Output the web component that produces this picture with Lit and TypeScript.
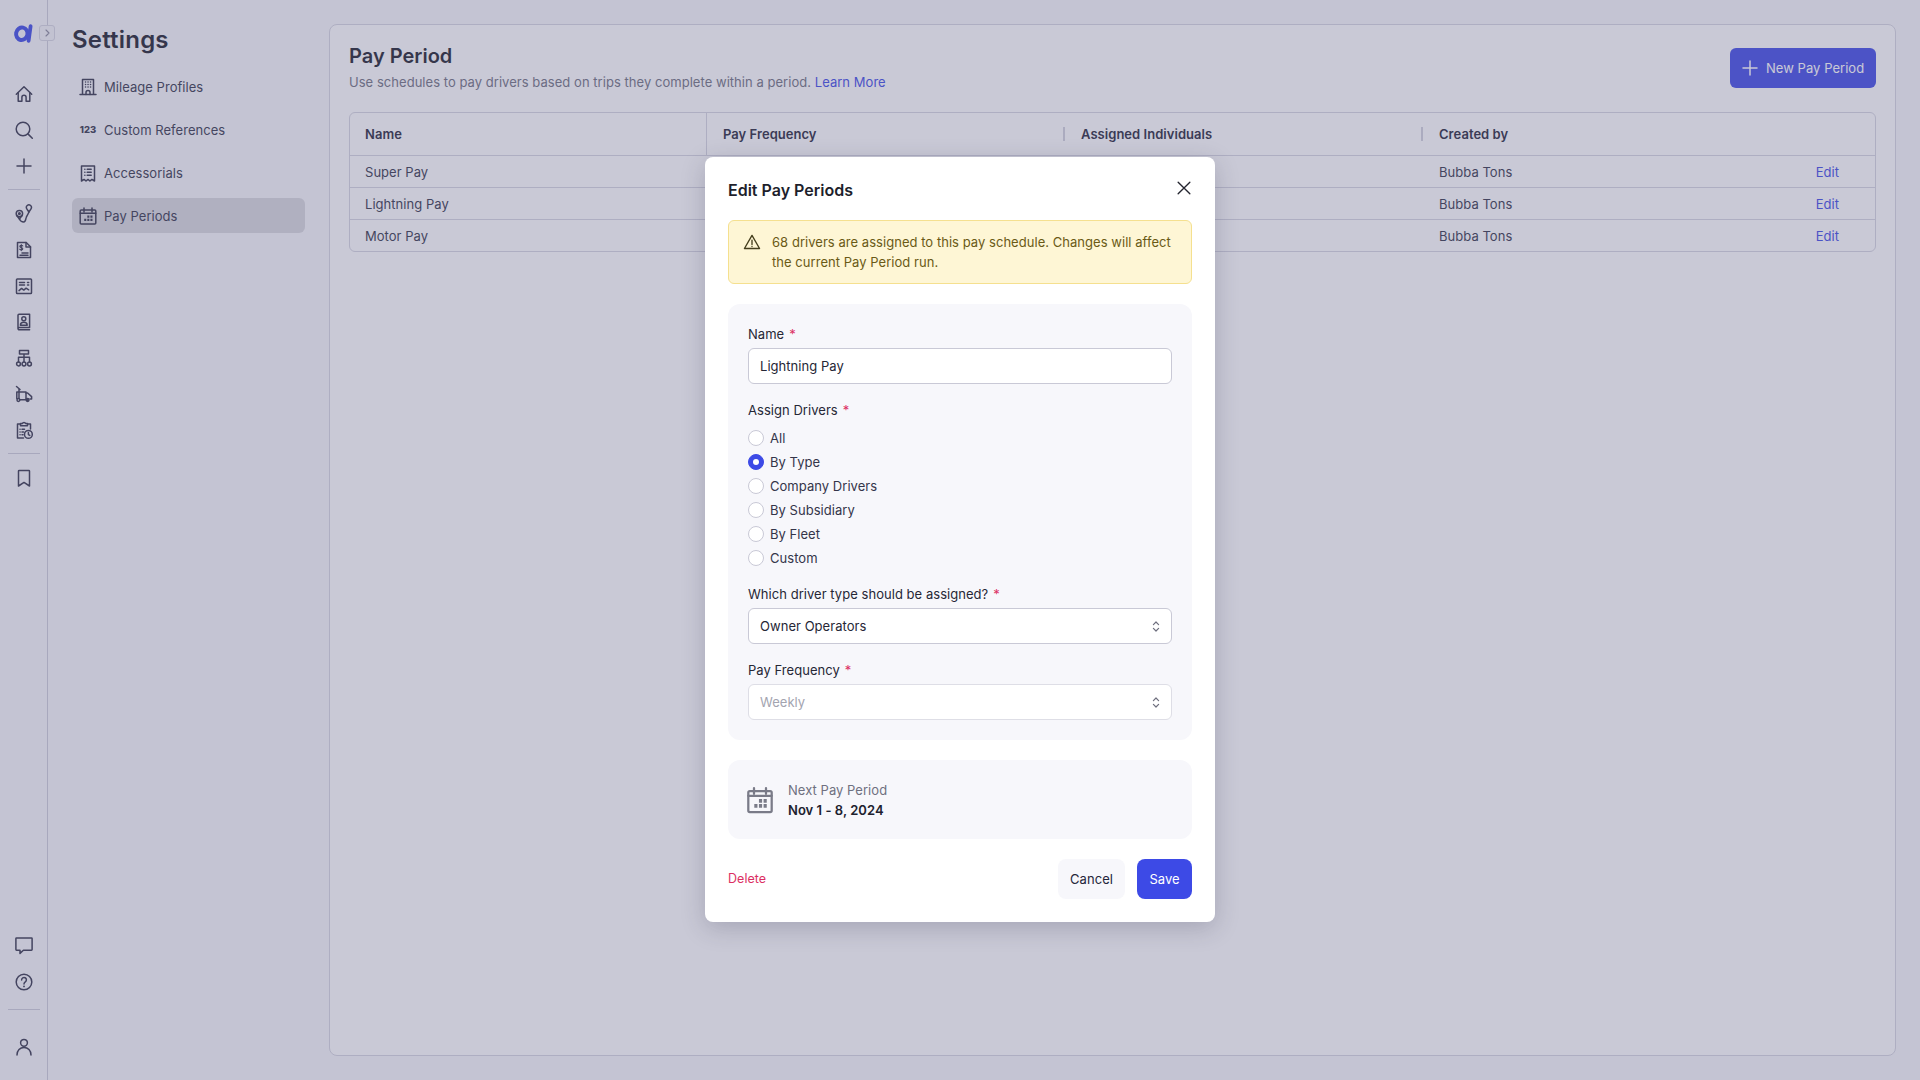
import { LitElement, html, css, svg } from "lit";
import { customElement } from "lit/decorators.js";

const I = (body: unknown, size = 20, vb = 20) =>
  html`<svg class="ic" width=${size} height=${size} viewBox="0 0 ${vb} ${vb}" fill="none" stroke="currentColor" stroke-width="1.5" stroke-linecap="round" stroke-linejoin="round">${body}</svg>`;

const icons = {
  home: svg`<path d="M2.3 10.2 10 2.8l7.7 7.4"/><path d="M4.2 8.6v8.6h3.7v-3.8a2.1 2.1 0 0 1 4.2 0v3.8h3.7V8.6"/>`,
  search: svg`<circle cx="9" cy="9" r="6.8"/><path d="m13.9 13.9 4.4 4.4"/>`,
  plus: svg`<path d="M10 3v14M3 10h14"/>`,
  route: svg`<circle cx="5.4" cy="9.6" r="3.2"/><circle cx="5.4" cy="9.6" r=".8"/><path d="M2.8 11.5 5.4 15l2.6-3.5"/><path d="M14.9 8 12.8 4.8a2.5 2.5 0 1 1 4.2 0z"/><path d="M5.4 15c1.2 2.6 2.8 3 4.2 3 2.4 0 2-3 2.6-4.6.5-1.5 1.9-3 2.7-5.4"/>`,
  invoice: svg`<path d="M3.5 2.5h8.7l4.3 4.3v10.7H3.5z"/><path d="M12 2.5V7h4.5M8 13h6M6 15.3h8" /><path d="M8.8 6c-.6-.9-3-.9-3 .5 0 1.5 3 .8 3 2.3 0 1.5-2.5 1.3-3.1.4M7.3 4.6v6" stroke-width="1.1"/>`,
  report: svg`<rect x="2.5" y="3" width="15" height="14.5" rx=".8"/><path d="M5.5 6.4h5M5.5 9h5M13.5 6.4h1.2M13.5 9h1.2" /><path d="m5 14.6 2.6-2.2 2.2 1.7 2.3-1.9 2.6 1.6"/>`,
  contacts: svg`<path d="M4 16.6V3.2a1 1 0 0 1 1-1h10.6v13.4H5.2A1.2 1.2 0 0 0 4 16.6a1.2 1.2 0 0 0 1.2 1.2h10.4"/><circle cx="9.8" cy="6.8" r="2"/><path d="M6.4 13.2c0-1.8 1.5-2.9 3.4-2.9s3.4 1.1 3.4 2.9z"/>`,
  org: svg`<path d="M5.5 2.5h9v3.6h-9zM4.5 9.2h11M10 6.1v8M4.5 9.2v4.9M15.5 9.2v4.9"/><circle cx="4.5" cy="16" r="1.9"/><circle cx="10" cy="16" r="1.9"/><circle cx="15.5" cy="16" r="1.9"/>`,
  truck: svg`<path d="M2.5 2.5 6 5.5M5 4.5v9.5M2.8 8h9.2v7M2.8 8v6.6"/><path d="M12 9h1.6l4 3.6V15H16"/><circle cx="4.4" cy="16" r="1.4"/><circle cx="13.6" cy="16" r="1.4" fill="currentColor"/><path d="M6 15.8h6" />`,
  clip: svg`<path d="M6.5 4H3.5v14h6"/><path d="M6.5 5.8V3.6h1.8a1.8 1.8 0 0 1 3.4 0h1.8v2.2z"/><path d="M13.5 4h3v5"/><path d="M6 9.2h.1M8 9.2h2.5M6 12h.1M8 12h1.5M6 14.8h.1M8 14.8h1"/><circle cx="14.4" cy="14.4" r="3.9"/><path d="M14.4 12.4v2.2l1.4.8"/>`,
  bookmark: svg`<path d="M4.5 3a.6.6 0 0 1 .6-.6h9.8a.6.6 0 0 1 .6.6v15L10 14.4 4.5 18z"/>`,
  chat: svg`<path d="M2.5 3h15a.6.6 0 0 1 .6.6v11a.6.6 0 0 1-.6.6H9.4L6 18.4v-3.2H2.5a.6.6 0 0 1-.6-.6v-11a.6.6 0 0 1 .6-.6z"/>`,
  help: svg`<circle cx="10" cy="10" r="7.8"/><path d="M7.6 7.9a2.4 2.4 0 1 1 3.7 2c-.9.6-1.3 1-1.3 2"/><path d="M10 14.3v.1" stroke-width="1.8"/>`,
  user: svg`<circle cx="10" cy="5.8" r="3.4"/><path d="M3 18c0-4.4 3-7.6 7-7.6s7 3.2 7 7.6"/>`,
  building: svg`<path d="M4.5 17.5v-15h11v15M2 17.5h16"/><path d="M7.5 5h.1M10 5h.1M12.5 5h.1M7.5 7.5h.1M10 7.5h.1M12.5 7.5h.1M7.5 10h.1M10 10h.1M12.5 10h.1"/><path d="M8 17.5v-2a2 2 0 0 1 4 0v2"/>`,
  receipt: svg`<path d="M3.5 3h13v15l-2.6-1.6-2 1.6-1.9-1.6-2 1.6-1.9-1.6-2.6 1.6z"/><path d="M6.8 6.3h.1M9.2 6.3h4M6.8 9.3h.1M9.2 9.3h4M6.8 12.3h.1M9.2 12.3h4"/>`,
  calendar: svg`<rect x="2.2" y="4" width="15.6" height="14" rx="1"/><path d="M6 2v3.8M14 2v3.8M2.2 7.2h15.6"/><path d="M9.3 10.6h2.1M12.4 10.6h2.1M6.2 13.9h2.1M9.3 13.9h2.1M12.4 13.9h2.1" stroke-width="2.4" stroke-linecap="butt"/>`,
  warn: svg`<path d="M10 2.6 18.4 17.2H1.6z"/><path d="M10 8v4.8M10 14.9v.1"/>`,
  close: svg`<path d="m3.5 3.5 13 13M16.5 3.5l-13 13"/>`,
  updown: svg`<path d="m2.4 4.6 2.6-2.6 2.6 2.6M2.4 8.4 5 11l2.6-2.6"/>`,
};

const railTop = [icons.home, icons.search, icons.plus];
const railMid = [icons.route, icons.invoice, icons.report, icons.contacts, icons.org, icons.truck, icons.clip];

@customElement("app-root")
export class AppRoot extends LitElement {
  static styles = css`
    :host {
      display: block;
      position: relative;
      width: 1920px;
      height: 1080px;
      overflow: hidden;
      font-family: Inter, "Liberation Sans", sans-serif;
      font-size: 13px;
      line-height: 20px;
      letter-spacing: 0.04px;
      color: #20212e;
      background: #f8f8fb;
    }
    * { box-sizing: border-box; }
    .ic { display: block; flex: none; }
    .page { display: flex; height: 1080px; }

    .rail {
      width: 48px;
      flex: none;
      display: flex;
      flex-direction: column;
      align-items: center;
      border-right: 1px solid #cdcdd9;
      padding-top: 76px;
      padding-bottom: 15px;
      color: #33344a;
      position: relative;
    }
    .rail-btn { width: 36px; height: 36px; display: flex; align-items: center; justify-content: center; flex: none; }
    .rail-div { width: 32px; height: 1px; background: #cdcdd9; margin: 5px 0 6px; flex: none; }
    .rail-div.last { margin: 9px 0 19px; }
    .rail-spacer { flex: 1; }
    .bottom-gap { margin-bottom: 1px; }
    .logo { position: absolute; left: 13px; top: 23px; }
    .collapse {
      position: absolute;
      left: 39px;
      top: 25px;
      width: 16px;
      height: 16px;
      border: 1px solid #d6d6e0;
      border-radius: 3px;
      background: #f4f4f8;
      color: #8a8a9c;
      display: flex;
      align-items: center;
      justify-content: center;
    }

    .side { width: 281px; flex: none; padding: 24px 24px 0 24px; }
    .side h1 { margin: 0 0 13px; font-size: 24px; line-height: 32px; font-weight: 600; letter-spacing: 0.2px; color: #1d1e2c; }
    .nav { display: flex; flex-direction: column; gap: 8px; }
    .nav-item { height: 35px; width: 233px; display: flex; align-items: center; gap: 6px; padding-left: 6px; border-radius: 6px; color: #34354a; }
    .nav-item.on { background: #d9d9de; }
    .n123 { width: 20px; font-size: 9.5px; font-weight: 800; text-align: center; flex: none; }

    .card {
      flex: 1;
      margin: 24px 24px 24px 0;
      background: #fff;
      border: 1px solid #d6d6e0;
      border-radius: 8px;
      padding: 17px 19px 0;
    }
    .head { display: flex; justify-content: space-between; align-items: center; margin-bottom: 20px; }
    .head h2 { margin: 0 0 2px; font-size: 20px; line-height: 28px; font-weight: 600; letter-spacing: 0; color: #1d1e2c; }
    .head p { margin: 0; color: #6f7080; }
    .link { color: #3d4ae6; }
    .new { height: 40px; width: 146px; margin-top: 2px; background: #3f4be6; color: #fff; border-radius: 6px; display: flex; align-items: center; gap: 6px; padding-left: 10px; }

    .table { border: 1px solid #d6d6e0; border-radius: 6px; }
    .tr { display: grid; grid-template-columns: 356px 358px 358px 1fr; height: 32px; border-top: 1px solid #d6d6e0; align-items: stretch; }
    .tr.th { height: 42px; border-top: 0; font-weight: 600; color: #25263a; }
    .td { display: flex; align-items: center; padding-left: 15px; color: #34354a; }
    .th .td { color: #25263a; }
    .td.full { border-left: 1px solid #d6d6e0; padding-left: 16px; }
    .td.sep { padding-left: 0; }
    .bar { width: 2px; height: 14px; background: #d2d2dc; margin-right: 16px; flex: none; margin-left: -1px; }
    .td.sb { justify-content: space-between; padding: 0 36px 0 17px; }

    .overlay {
      position: absolute;
      inset: 0;
      padding-bottom: 1px;
      background: rgba(100, 100, 138, 0.35);
      display: flex;
      align-items: center;
      justify-content: center;
    }
    .modal {
      width: 510px;
      height: 765px;
      background: #fff;
      border-radius: 8px;
      padding: 21px 23px 23px;
      box-shadow: 0 6px 24px rgba(40, 40, 70, 0.22);
      display: flex;
      flex-direction: column;
      gap: 20px;
    }
    .m-head { display: flex; justify-content: space-between; align-items: flex-start; height: 24px; margin-bottom: -2px; }
    .m-head h3 { margin: 0; font-size: 16px; line-height: 24px; font-weight: 600; letter-spacing: 0; color: #1e1f2c; }
    .x { color: #24252f; margin: 1px -1px 0 0; }
    .alert {
      height: 64px;
      background: #fef6d5;
      border: 1px solid #f5e08f;
      border-radius: 6px;
      display: flex;
      gap: 11px;
      padding: 11px 14px;
      color: #6a5a16;
    }
    .alert .ic { margin-top: 1px; color: #453f1e; }

    .panel { background: #f7f7fb; border-radius: 12px; padding: 20px; }
    .form { height: 436px; display: flex; flex-direction: column; }
    .label { color: #262736; display: flex; }
    .star { color: #dc2f63; margin-left: 5px; }
    .field { height: 36px; margin-top: 4px; background: #fff; border: 1px solid #c9c9d6; border-radius: 6px; display: flex; align-items: center; justify-content: space-between; padding: 0 11px; color: #262736; }
    .field.dis { border-color: #dedee6; color: #a3a4b0; }
    .updown { width: 10px; height: 13px; color: #6e6f7e; margin-right: -1px; }
    .gap16 { margin-top: 16px; }
    .gap14 { margin-top: 14px; }
    .radios { margin-top: 6px; display: flex; flex-direction: column; }
    .radio { height: 24px; display: flex; align-items: center; gap: 6px; color: #34354a; }
    .dot { width: 16px; height: 16px; border-radius: 50%; border: 1px solid #c9c9d6; background: #fff; flex: none; display: flex; align-items: center; justify-content: center; }
    .dot.on { background: #3d4ae6; border-color: #3d4ae6; }
    .dot.on::after { content: ""; width: 6px; height: 6px; border-radius: 50%; background: #fff; }

    .next { height: 79px; display: flex; align-items: center; gap: 13px; padding: 0 17px; }
    .next .ic { color: #7a7b88; }
    .next .k { color: #6f7080; }
    .next .v { color: #20212e; font-weight: 600; }

    .foot { height: 40px; display: flex; align-items: center; gap: 12px; }
    .del { color: #dc2f63; font-size: 12.5px; margin-right: auto; }
    .btn { height: 40px; border-radius: 8px; display: flex; align-items: center; justify-content: center; }
    .cancel { width: 67px; background: #f7f7fb; color: #25263a; }
    .save { width: 55px; background: #3d4ae6; color: #fff; }
  `;

  private rows = ["Super Pay", "Lightning Pay", "Motor Pay"];
  private radios = ["All", "By Type", "Company Drivers", "By Subsidiary", "By Fleet", "Custom"];

  private rail() {
    return html`<aside class="rail">
      <svg class="logo" width="21" height="21" viewBox="0 0 21 21" fill="none">
        <ellipse cx="8.8" cy="10.8" rx="5.7" ry="6.3" transform="rotate(12 8.8 10.8)" stroke="#3d4ae6" stroke-width="4"/>
        <path d="M17.6 3.2 15.6 17.8" stroke="#3d4ae6" stroke-width="3.8" stroke-linecap="round"/>
      </svg>
      <div class="collapse">
        <svg width="8" height="8" viewBox="0 0 8 8" fill="none" stroke="currentColor" stroke-width="1.1" stroke-linecap="round" stroke-linejoin="round"><path d="m3 1 3 3-3 3"/></svg>
      </div>
      ${railTop.map((i) => html`<div class="rail-btn">${I(i)}</div>`)}
      <div class="rail-div"></div>
      ${railMid.map((i) => html`<div class="rail-btn">${I(i)}</div>`)}
      <div class="rail-div"></div>
      <div class="rail-btn">${I(icons.bookmark)}</div>
      <div class="rail-spacer"></div>
      <div class="rail-btn bottom-gap">${I(icons.chat)}</div>
      <div class="rail-btn">${I(icons.help)}</div>
      <div class="rail-div last"></div>
      <div class="rail-btn">${I(icons.user)}</div>
    </aside>`;
  }

  private side() {
    return html`<nav class="side">
      <h1>Settings</h1>
      <div class="nav">
        <div class="nav-item">${I(icons.building)}<span>Mileage Profiles</span></div>
        <div class="nav-item"><span class="n123">123</span><span>Custom References</span></div>
        <div class="nav-item">${I(icons.receipt)}<span>Accessorials</span></div>
        <div class="nav-item on">${I(icons.calendar)}<span>Pay Periods</span></div>
      </div>
    </nav>`;
  }

  private main() {
    return html`<main class="card">
      <div class="head">
        <div>
          <h2>Pay Period</h2>
          <p>Use schedules to pay drivers based on trips they complete within a period. <span class="link">Learn More</span></p>
        </div>
        <div class="new">${I(icons.plus)}<span>New Pay Period</span></div>
      </div>
      <div class="table">
        <div class="tr th">
          <div class="td">Name</div>
          <div class="td full">Pay Frequency</div>
          <div class="td sep"><span class="bar"></span>Assigned Individuals</div>
          <div class="td sep"><span class="bar"></span>Created by</div>
        </div>
        ${this.rows.map(
          (r) => html`<div class="tr">
            <div class="td">${r}</div>
            <div class="td"></div>
            <div class="td"></div>
            <div class="td sb"><span>Bubba Tons</span><span class="link">Edit</span></div>
          </div>`
        )}
      </div>
    </main>`;
  }

  private selectField(text: string, dis = false) {
    return html`<div class="field ${dis ? "dis" : ""}">
      <span>${text}</span>
      <svg class="updown" viewBox="0 0 10 13" fill="none" stroke="currentColor" stroke-width="1.2" stroke-linecap="round" stroke-linejoin="round">${icons.updown}</svg>
    </div>`;
  }

  private modal() {
    return html`<div class="overlay">
      <section class="modal">
        <div class="m-head">
          <h3>Edit Pay Periods</h3>
          <span class="x">${I(icons.close, 18)}</span>
        </div>
        <div class="alert">
          ${I(icons.warn, 18)}
          <div>68 drivers are assigned to this pay schedule. Changes will affect the current Pay Period run.</div>
        </div>
        <div class="panel form">
          <div class="label">Name<span class="star">*</span></div>
          <div class="field"><span>Lightning Pay</span></div>
          <div class="label gap16">Assign Drivers<span class="star">*</span></div>
          <div class="radios">
            ${this.radios.map(
              (r) => html`<div class="radio"><span class="dot ${r === "By Type" ? "on" : ""}"></span><span>${r}</span></div>`
            )}
          </div>
          <div class="label gap14">Which driver type should be assigned?<span class="star">*</span></div>
          ${this.selectField("Owner Operators")}
          <div class="label gap16">Pay Frequency<span class="star">*</span></div>
          ${this.selectField("Weekly", true)}
        </div>
        <div class="panel next">
          ${I(icons.calendar, 30)}
          <div>
            <div class="k">Next Pay Period</div>
            <div class="v">Nov 1 - 8, 2024</div>
          </div>
        </div>
        <div class="foot">
          <span class="del">Delete</span>
          <div class="btn cancel">Cancel</div>
          <div class="btn save">Save</div>
        </div>
      </section>
    </div>`;
  }

  render() {
    return html`<div class="page">${this.rail()}${this.side()}${this.main()}</div>${this.modal()}`;
  }
}
